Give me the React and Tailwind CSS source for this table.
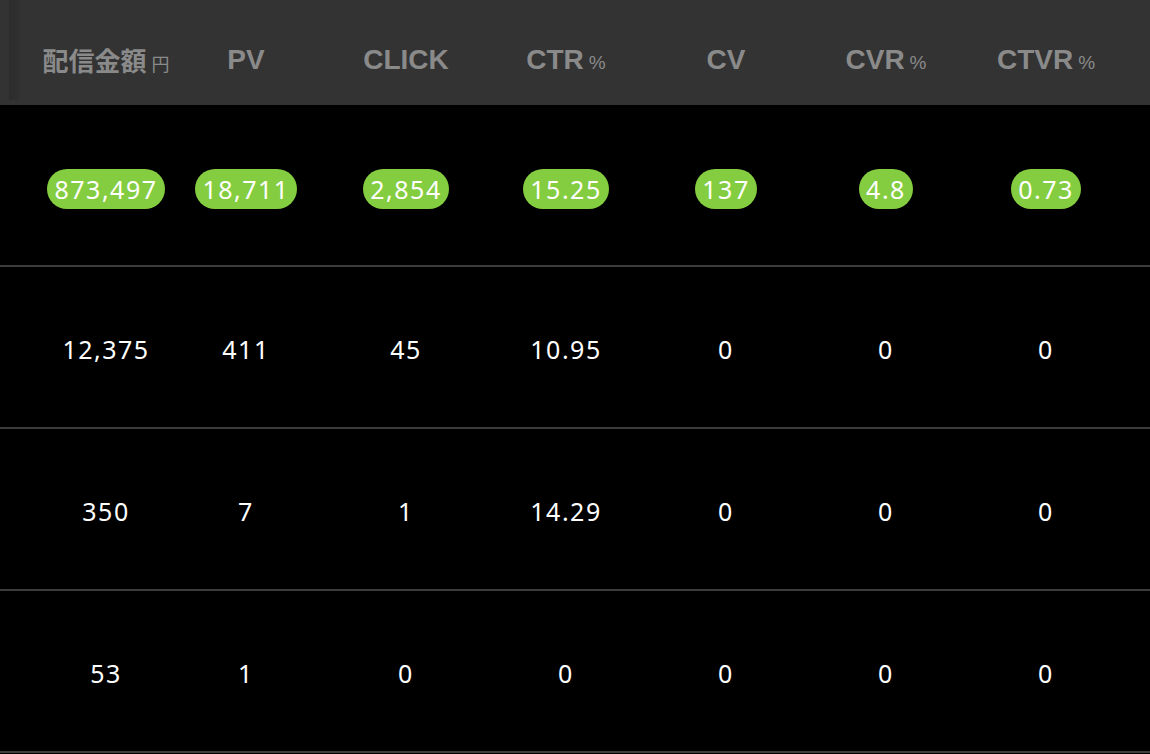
import React from "react";

const columns = [
  { label: "配信金額", unit: "円", cjk: true },
  { label: "PV" },
  { label: "CLICK" },
  { label: "CTR", unit: "%" },
  { label: "CV" },
  { label: "CVR", unit: "%" },
  { label: "CTVR", unit: "%" },
];

const total = ["873,497", "18,711", "2,854", "15.25", "137", "4.8", "0.73"];

const rows = [
  ["12,375", "411", "45", "10.95", "0", "0", "0"],
  ["350", "7", "1", "14.29", "0", "0", "0"],
  ["53", "1", "0", "0", "0", "0", "0"],
];

const gridCols = "grid grid-cols-[120px_repeat(6,160px)] pl-[46px]";

const App = () => {
  return (
    <div
      className="w-[1150px] h-[754px] bg-black overflow-hidden"
      style={{ fontFamily: '"Noto Sans", "Noto Sans CJK JP", sans-serif' }}
    >
      {/* header */}
      <div className="relative h-[105px] bg-[#333333]">
        <div className="absolute left-[9px] top-0 h-[100px] w-[10px] bg-gradient-to-r from-[#2c2c2c] to-[#303030]" />
        <div className={`${gridCols} h-full items-center pt-[14px]`}>
          {columns.map((col) => (
            <div
              key={col.label}
              className="flex justify-center items-baseline gap-[5px] whitespace-nowrap text-[#8a8a8a]"
            >
              <span
                className={
                  col.cjk
                    ? "text-[26px] font-bold"
                    : "text-[28px] font-bold"
                }
                style={{
                  fontFamily: col.cjk
                    ? '"Noto Sans CJK JP", sans-serif'
                    : '"Liberation Sans", Arial, sans-serif',
                }}
              >
                {col.label}
              </span>
              {col.unit && (
                <span
                  className={col.cjk ? "text-[18px]" : "text-[19px]"}
                  style={{
                    fontFamily: col.cjk
                      ? '"Noto Sans CJK JP", sans-serif'
                      : '"Liberation Sans", Arial, sans-serif',
                  }}
                >
                  {col.unit}
                </span>
              )}
            </div>
          ))}
        </div>
      </div>

      {/* totals */}
      <div className={`${gridCols} h-[162px] items-center border-b-2 border-[#3c3c3c] pt-[8px]`}>
        {total.map((v, i) => (
          <div key={i} className="flex justify-center">
            <span className="h-[40px] flex items-center rounded-full bg-[#85cd40] px-[7px] text-white text-[25px] tracking-[1.5px] leading-none">
              {v}
            </span>
          </div>
        ))}
      </div>

      {rows.map((row, r) => (
        <div
          key={r}
          className={`${gridCols} h-[162px] items-center border-b-2 border-[#3c3c3c] pt-[6px]`}
        >
          {row.map((v, i) => (
            <div key={i} className="flex justify-center text-white text-[25px] tracking-[1.5px]">
              {v}
            </div>
          ))}
        </div>
      ))}
    </div>
  );
};

export default App;
